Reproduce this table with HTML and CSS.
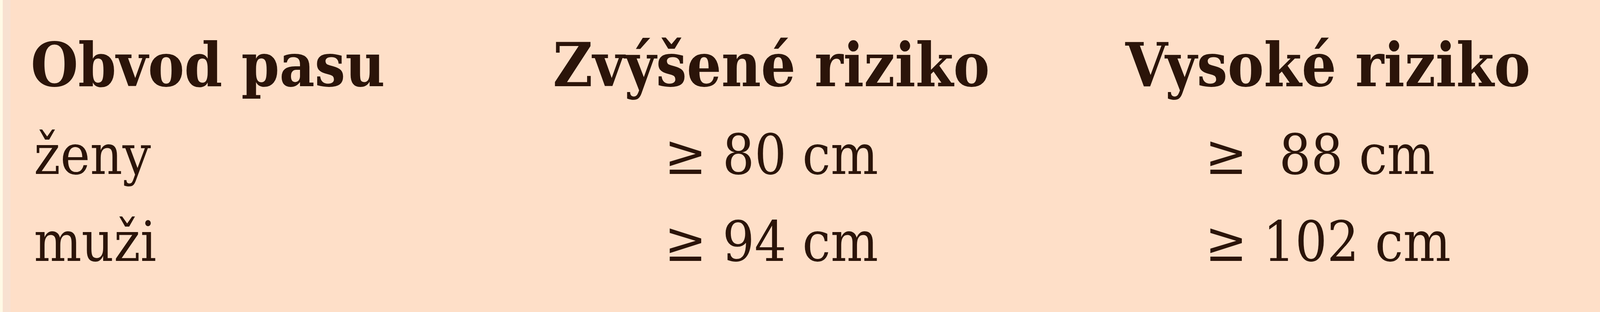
FILE: index.html
```html
<!DOCTYPE html>
<html lang="cs">
<head>
<meta charset="utf-8">
<title>Obvod pasu</title>
<link rel="stylesheet" href="styles.css">
</head>
<body>
<div class="page">
  <div class="col col-label">
    <div class="cell head">Obvod pasu</div>
    <div class="vals">
      <div class="cell">ženy</div>
      <div class="cell">muži</div>
    </div>
  </div>
  <div class="col col-mid">
    <div class="cell head">Zvýšené riziko</div>
    <div class="vals">
      <div class="cell">≥ 80 cm</div>
      <div class="cell">≥ 94 cm</div>
    </div>
  </div>
  <div class="col col-high">
    <div class="cell head">Vysoké riziko</div>
    <div class="vals">
      <div class="cell">≥&nbsp;&nbsp;88 cm</div>
      <div class="cell">≥ 102 cm</div>
    </div>
  </div>
</div>
</body>
</html>
```

FILE: styles.css
```css
html, body {
  margin: 0;
  padding: 0;
}

body {
  background: #fedfc8;
  overflow: hidden;
}

.page {
  width: 100%;
  height: 800px;
  box-sizing: border-box;
  padding-top: 55px;
  display: grid;
  grid-template-columns: 1.92% 32.64% 35.78% 1fr;
  align-items: start;
  background: linear-gradient(to right, #fffae6 0, #fffae6 0.16%, #f8e1d1 0.16%, #f8e1d1 0.67%, #fedfc8 0.67%);
  color: #2b1409;
}

.col {
  display: flex;
  flex-direction: column;
  width: max-content;
}

.col-label {
  grid-column: 2;
  align-items: flex-start;
}

.col-mid {
  grid-column: 3;
  align-items: center;
}

.col-high {
  grid-column: 4;
  align-items: center;
}

.vals {
  display: flex;
  flex-direction: column;
  align-items: flex-start;
}

.col-label .vals {
  padding-left: 8px;
}

.cell {
  font-family: "DejaVu Serif Condensed", "DejaVu Serif", serif;
  font-stretch: condensed;
  font-size: 143px;
  line-height: 223px;
  height: 223px;
  white-space: pre;
}

.head {
  font-weight: bold;
  font-size: 155px;
  height: 230px;
}
```
